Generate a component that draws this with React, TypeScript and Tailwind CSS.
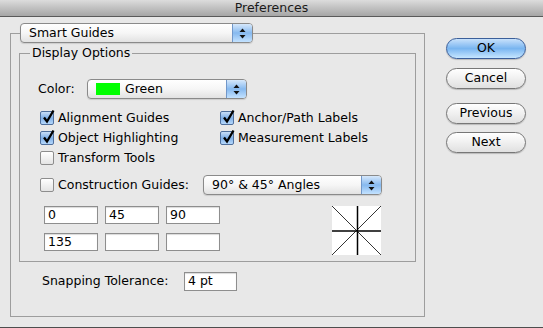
import React from "react";

const Arrows = () => (
  <svg width="7" height="11" viewBox="0 0 7 11">
    <path d="M3.5 0.5 L6.5 4 L0.5 4 Z" fill="#111" />
    <path d="M0.5 7 L6.5 7 L3.5 10.5 Z" fill="#111" />
  </svg>
);

const Popup = ({ children, className = "" }: { children: React.ReactNode; className?: string }) => (
  <div
    className={`flex h-[20px] shrink-0 items-stretch rounded-[4px] border border-[#8a8a8a] bg-gradient-to-b from-white via-[#f6f6f6] to-[#e2e2e2] shadow-[0_1px_1px_rgba(0,0,0,0.12)] ${className}`}
  >
    <div className="flex flex-1 items-center gap-[5px] pl-[8px] leading-none whitespace-nowrap">{children}</div>
    <div className="flex w-[20px] items-center justify-center rounded-r-[3px] border-l border-[#7197c9] bg-gradient-to-b from-[#d6e8fb] via-[#86b9ef] to-[#c3e2ff]">
      <Arrows />
    </div>
  </div>
);

const Checkbox = ({ checked, label }: { checked?: boolean; label: string }) => (
  <div className="flex h-[20px] items-center gap-[4px] whitespace-nowrap">
    {checked ? (
      <div className="relative h-[14px] w-[14px] shrink-0 rounded-[2px] border border-[#4f6f9c] bg-gradient-to-b from-[#c9def6] via-[#7fb0e8] to-[#b5d7fb]">
        <svg className="absolute left-[1px] top-[-3px]" width="14" height="15" viewBox="0 0 14 15">
          <path d="M2 8.5 L5 12.5 L11.5 1.5" fill="none" stroke="#000" strokeWidth="2.3" />
        </svg>
      </div>
    ) : (
      <div className="h-[14px] w-[14px] shrink-0 rounded-[2px] border border-[#8d8d8d] bg-gradient-to-b from-white to-[#e4e4e4]" />
    )}
    <span>{label}</span>
  </div>
);

const Field = ({ value = "" }: { value?: string }) => (
  <div className="flex h-[18px] w-[54px] items-center border border-[#8e8e8e] bg-white pl-[3px] leading-none shadow-[inset_0_1px_1px_rgba(0,0,0,0.15)]">
    {value}
  </div>
);

const Button = ({ children, primary }: { children: React.ReactNode; primary?: boolean }) => (
  <div
    className={`flex h-[21px] w-[80px] items-center justify-center rounded-full border leading-none shadow-[0_1px_1px_rgba(0,0,0,0.2)] ${
      primary
        ? "border-[#3b5f9a] bg-gradient-to-b from-[#c8e1fb] via-[#79b5f0] to-[#c6e6ff]"
        : "border-[#777777] bg-gradient-to-b from-white via-[#f0f0f0] to-[#e0e0e0]"
    }`}
  >
    {children}
  </div>
);

const AngleBox = () => (
  <svg width="49" height="49" viewBox="0 0 49 49" className="bg-white">
    <line x1="0" y1="0" x2="49" y2="49" stroke="#000" strokeWidth="0.8" />
    <line x1="49" y1="0" x2="0" y2="49" stroke="#000" strokeWidth="0.8" />
    <line x1="0" y1="25" x2="49" y2="25" stroke="#000" strokeWidth="1.5" />
    <line x1="25.5" y1="0" x2="25.5" y2="49" stroke="#000" strokeWidth="1.5" />
  </svg>
);

export default function App() {
  return (
    <div className="flex h-[328px] w-[543px] flex-col bg-[#e8e8e8] font-['DejaVu_Sans',sans-serif] text-[12.5px] text-black">
      <div className="flex h-[17px] items-center justify-center border-b border-[#5a5a5a] bg-gradient-to-b from-[#dcdcdc] to-[#a6a6a6] leading-none text-[#1a1a1a]">
        Preferences
      </div>

      <div className="flex flex-1 border-b border-[#4d4d4d]">
        <fieldset className="ml-[10px] mt-[6px] h-[294px] w-[415px] border border-[#9d9d9d] pl-[8px] pr-[8px]">
          <legend className="ml-[1px]">
            <Popup className="w-[233px]">Smart Guides</Popup>
          </legend>

          <fieldset className="mt-[2px] h-[217px] border border-[#9d9d9d]">
            <legend className="ml-[10px] px-[2px] leading-[16px]">Display Options</legend>

            <div className="ml-[18px] mt-[18px] flex h-[20px] items-center">
              <span className="w-[49px]">Color:</span>
              <Popup className="w-[160px]">
                <span className="h-[12px] w-[24px] bg-[#00ff00]" />
                <span>Green</span>
              </Popup>
            </div>

            <div className="ml-[20px] mt-[9px] grid grid-cols-[180px_1fr]">
              <Checkbox checked label="Alignment Guides" />
              <Checkbox checked label="Anchor/Path Labels" />
              <Checkbox checked label="Object Highlighting" />
              <Checkbox checked label="Measurement Labels" />
              <Checkbox label="Transform Tools" />
            </div>

            <div className="ml-[20px] mt-[7px] flex items-center">
              <div className="w-[163px] shrink-0">
                <Checkbox label="Construction Guides:" />
              </div>
              <Popup className="w-[179px]">90° &amp; 45° Angles</Popup>
            </div>

            <div className="ml-[24px] mt-[11px] flex">
              <div className="flex flex-col gap-[9px]">
                <div className="flex gap-[7px]">
                  <Field value="0" />
                  <Field value="45" />
                  <Field value="90" />
                </div>
                <div className="flex gap-[7px]">
                  <Field value="135" />
                  <Field />
                  <Field />
                </div>
              </div>
              <div className="ml-[112px]">
                <AngleBox />
              </div>
            </div>
          </fieldset>

          <div className="ml-[23px] mt-[10px] flex h-[19px] items-center">
            <span className="w-[142px]">Snapping Tolerance:</span>
            <div className="flex h-[19px] w-[53px] items-center border border-[#8e8e8e] bg-white pl-[3px] leading-none shadow-[inset_0_1px_1px_rgba(0,0,0,0.15)]">
              4 pt
            </div>
          </div>
        </fieldset>

        <div className="ml-[21px] mt-[21px] flex w-[80px] flex-col">
          <Button primary>OK</Button>
          <div className="mt-[9px]">
            <Button>Cancel</Button>
          </div>
          <div className="mt-[14px]">
            <Button>Previous</Button>
          </div>
          <div className="mt-[8px]">
            <Button>Next</Button>
          </div>
        </div>
      </div>
    </div>
  );
}
